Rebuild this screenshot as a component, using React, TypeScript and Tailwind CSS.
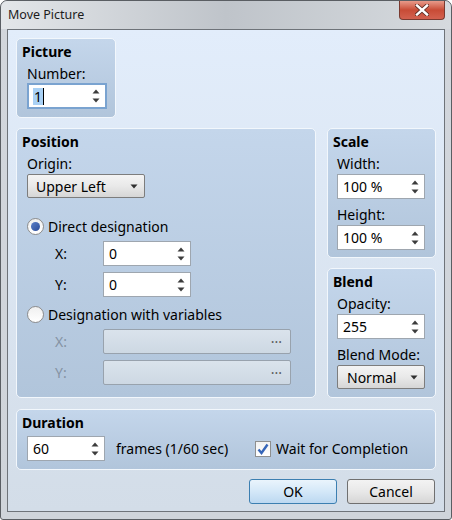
import React from "react";

// spin arrows used by all numeric fields
const SpinArrows = () => (
  <svg width="8" height="14" viewBox="0 0 8 14" className="shrink-0">
    <path d="M0.5 4.5 L4 0.5 L7.5 4.5 Z" fill="#3c3c3c" />
    <path d="M0.5 9.5 L4 13.5 L7.5 9.5 Z" fill="#3c3c3c" />
  </svg>
);

const ComboArrow = () => (
  <svg width="8" height="5" viewBox="0 0 8 5" className="shrink-0">
    <path d="M0.5 0.5 L7.5 0.5 L4 4.5 Z" fill="#2f2f2f" />
  </svg>
);

type SpinProps = { value: string; width: string };

const Spin = ({ value, width }: SpinProps) => (
  <div
    className={`${width} h-[25px] flex items-center justify-between bg-white pl-[5px] pr-[5px] border border-[#9ea6af]`}
  >
    <span className="leading-[17px]">{value}</span>
    <SpinArrows />
  </div>
);

const FocusedSpin = () => (
  <div className="w-[80px] h-[26px] flex items-center justify-between bg-white pl-[4px] pr-[5px] border-2 border-[#7aa3d0]">
    <span className="flex items-center leading-[17px]">
      <span className="bg-[#a9d1f5] px-[1px]">1</span>
      <span className="w-[1px] h-[17px] bg-black" />
    </span>
    <SpinArrows />
  </div>
);

const Combo = ({ value, width, pl }: { value: string; width: string; pl: string }) => (
  <div
    className={`${width} h-[24px] flex items-center justify-between ${pl} pr-[6px] rounded-[2px] border border-[#7d7d7d] bg-gradient-to-b from-[#f4f4f4] via-[#e9e9e9] to-[#d6d6d6]`}
  >
    <span className="leading-[17px]">{value}</span>
    <ComboArrow />
  </div>
);

const VarField = () => (
  <div className="w-[188px] h-[25px] flex items-center justify-end pr-[8px] rounded-[2px] border border-[#98a2ad] bg-gradient-to-b from-[#dae3ec] to-[#cdd8e3] text-[#5a5a5a] leading-[10px]">
    ···
  </div>
);

const Radio = ({ checked }: { checked?: boolean }) => (
  <div className="w-[17px] h-[17px] rounded-full border border-[#8c8c8c] bg-gradient-to-b from-[#f0f0f0] to-white flex items-center justify-center shrink-0">
    {checked && <div className="w-[9px] h-[9px] rounded-full bg-gradient-to-br from-[#5b80c8] to-[#2b4c9a]" />}
  </div>
);

const Group = ({ className, children }: { className: string; children: React.ReactNode }) => (
  <div
    className={`${className} rounded-[5px] border border-[#f2f7fc] bg-gradient-to-b from-[#c4d6eb] to-[#b1c5db] pt-[4px] pl-[5px]`}
  >
    {children}
  </div>
);

const Title = ({ text }: { text: string }) => (
  <div className="font-bold leading-[17px]">{text}</div>
);

export default function App() {
  return (
    <div className="w-[452px] h-[520px] rounded-t-[7px] rounded-b-[3px] border border-[#5a5e63] bg-gradient-to-b from-[#d2d6dc] to-[#cfd4da] flex flex-col text-[14px] text-black font-['Noto_Sans',sans-serif]">
      {/* title bar */}
      <div className="h-[28px] flex items-start justify-between rounded-t-[7px] bg-gradient-to-r from-[#e3e6e9] via-[#bfc4ca] to-[#d6dade]">
        <div className="pl-[7px] pt-[6px] text-[12.5px] leading-[16px] text-[#1c1c1c]">Move Picture</div>
        <div className="mr-[6px] w-[46px] h-[19px] rounded-b-[4px] border border-t-0 border-[#7a3a30] bg-gradient-to-b from-[#e79a8a] via-[#c84b36] to-[#d3614f] flex items-center justify-center">
          <svg width="14" height="12" viewBox="0 0 14 12">
            <path d="M2 1.5 L12 10.5 M12 1.5 L2 10.5" stroke="#5a2a22" strokeWidth="4" strokeLinecap="square" />
            <path d="M2 1.5 L12 10.5 M12 1.5 L2 10.5" stroke="#ffffff" strokeWidth="2.4" strokeLinecap="square" />
          </svg>
        </div>
      </div>

      {/* client area */}
      <div className="mx-[6px] h-[483px] border border-[#6e7379] bg-gradient-to-b from-[#e2edfb] to-[#d3dde8] px-[8px] pt-[8px] flex flex-col">
        <Group className="w-[100px] h-[80px]">
          <Title text="Picture" />
          <div className="pl-[5px]">
            <div className="mt-[5px] leading-[17px]">Number:</div>
            <div className="mt-[1px]">
              <FocusedSpin />
            </div>
          </div>
        </Group>

        <div className="mt-[10px] flex gap-[11px]">
          <Group className="w-[300px] h-[270px]">
            <Title text="Position" />
            <div className="pl-[5px]">
              <div className="mt-[5px] leading-[17px]">Origin:</div>
              <div className="mt-[2px]">
                <Combo value="Upper Left" width="w-[118px]" pl="pl-[8px]" />
              </div>
              <div className="mt-[20px] flex items-center gap-[4px] h-[17px]">
                <Radio checked />
                <span className="leading-[17px]">Direct designation</span>
              </div>
              <div className="mt-[6px] flex items-center">
                <span className="w-[76px] pl-[28px] leading-[17px]">X:</span>
                <Spin value="0" width="w-[88px]" />
              </div>
              <div className="mt-[6px] flex items-center">
                <span className="w-[76px] pl-[28px] leading-[17px]">Y:</span>
                <Spin value="0" width="w-[88px]" />
              </div>
              <div className="mt-[9px] flex items-center gap-[4px] h-[17px]">
                <Radio />
                <span className="leading-[17px]">Designation with variables</span>
              </div>
              <div className="mt-[6px] flex items-center">
                <span className="w-[76px] pl-[28px] leading-[17px] text-[#8593a3]">X:</span>
                <VarField />
              </div>
              <div className="mt-[6px] flex items-center">
                <span className="w-[76px] pl-[28px] leading-[17px] text-[#8593a3]">Y:</span>
                <VarField />
              </div>
            </div>
          </Group>

          <div className="flex flex-col gap-[10px]">
            <Group className="w-[109px] h-[130px]">
              <Title text="Scale" />
              <div className="pl-[4px]">
                <div className="mt-[5px] leading-[17px]">Width:</div>
                <div className="mt-[2px]">
                  <Spin value="100 %" width="w-[88px]" />
                </div>
                <div className="mt-[7px] leading-[17px]">Height:</div>
                <div className="mt-[2px]">
                  <Spin value="100 %" width="w-[88px]" />
                </div>
              </div>
            </Group>
            <Group className="w-[109px] h-[130px]">
              <Title text="Blend" />
              <div className="pl-[4px]">
                <div className="mt-[5px] leading-[17px]">Opacity:</div>
                <div className="mt-[2px]">
                  <Spin value="255" width="w-[88px]" />
                </div>
                <div className="mt-[7px] leading-[17px]">Blend Mode:</div>
                <div className="mt-[2px]">
                  <Combo value="Normal" width="w-[88px]" pl="pl-[9px]" />
                </div>
              </div>
            </Group>
          </div>
        </div>

        <Group className="mt-[11px] w-[420px] h-[61px]">
          <Title text="Duration" />
          <div className="pl-[5px] mt-[5px] flex items-center">
            <Spin value="60" width="w-[78px]" />
            <span className="ml-[11px] leading-[17px]">frames (1/60 sec)</span>
            <div className="ml-[27px] w-[16px] h-[16px] border border-[#8e8f8f] bg-gradient-to-b from-[#f2f2f2] to-white flex items-center justify-center">
              <svg width="12" height="12" viewBox="0 0 12 12">
                <path d="M1.5 6.5 L4.5 10 L10.5 1.5" stroke="#3565b8" strokeWidth="2.4" fill="none" />
              </svg>
            </div>
            <span className="ml-[5px] leading-[17px]">Wait for Completion</span>
          </div>
        </Group>

        <div className="mt-[9px] mr-[1px] flex justify-end gap-[10px]">
          <button className="w-[88px] h-[25px] rounded-[3px] border border-[#3c7fb1] bg-gradient-to-b from-[#eaf4fc] via-[#d4e8f8] to-[#bcd8f1] leading-[17px]">
            OK
          </button>
          <button className="w-[88px] h-[25px] rounded-[3px] border border-[#707070] bg-gradient-to-b from-[#f3f3f3] via-[#e8e8e8] to-[#d6d6d6] leading-[17px]">
            Cancel
          </button>
        </div>
      </div>
    </div>
  );
}
